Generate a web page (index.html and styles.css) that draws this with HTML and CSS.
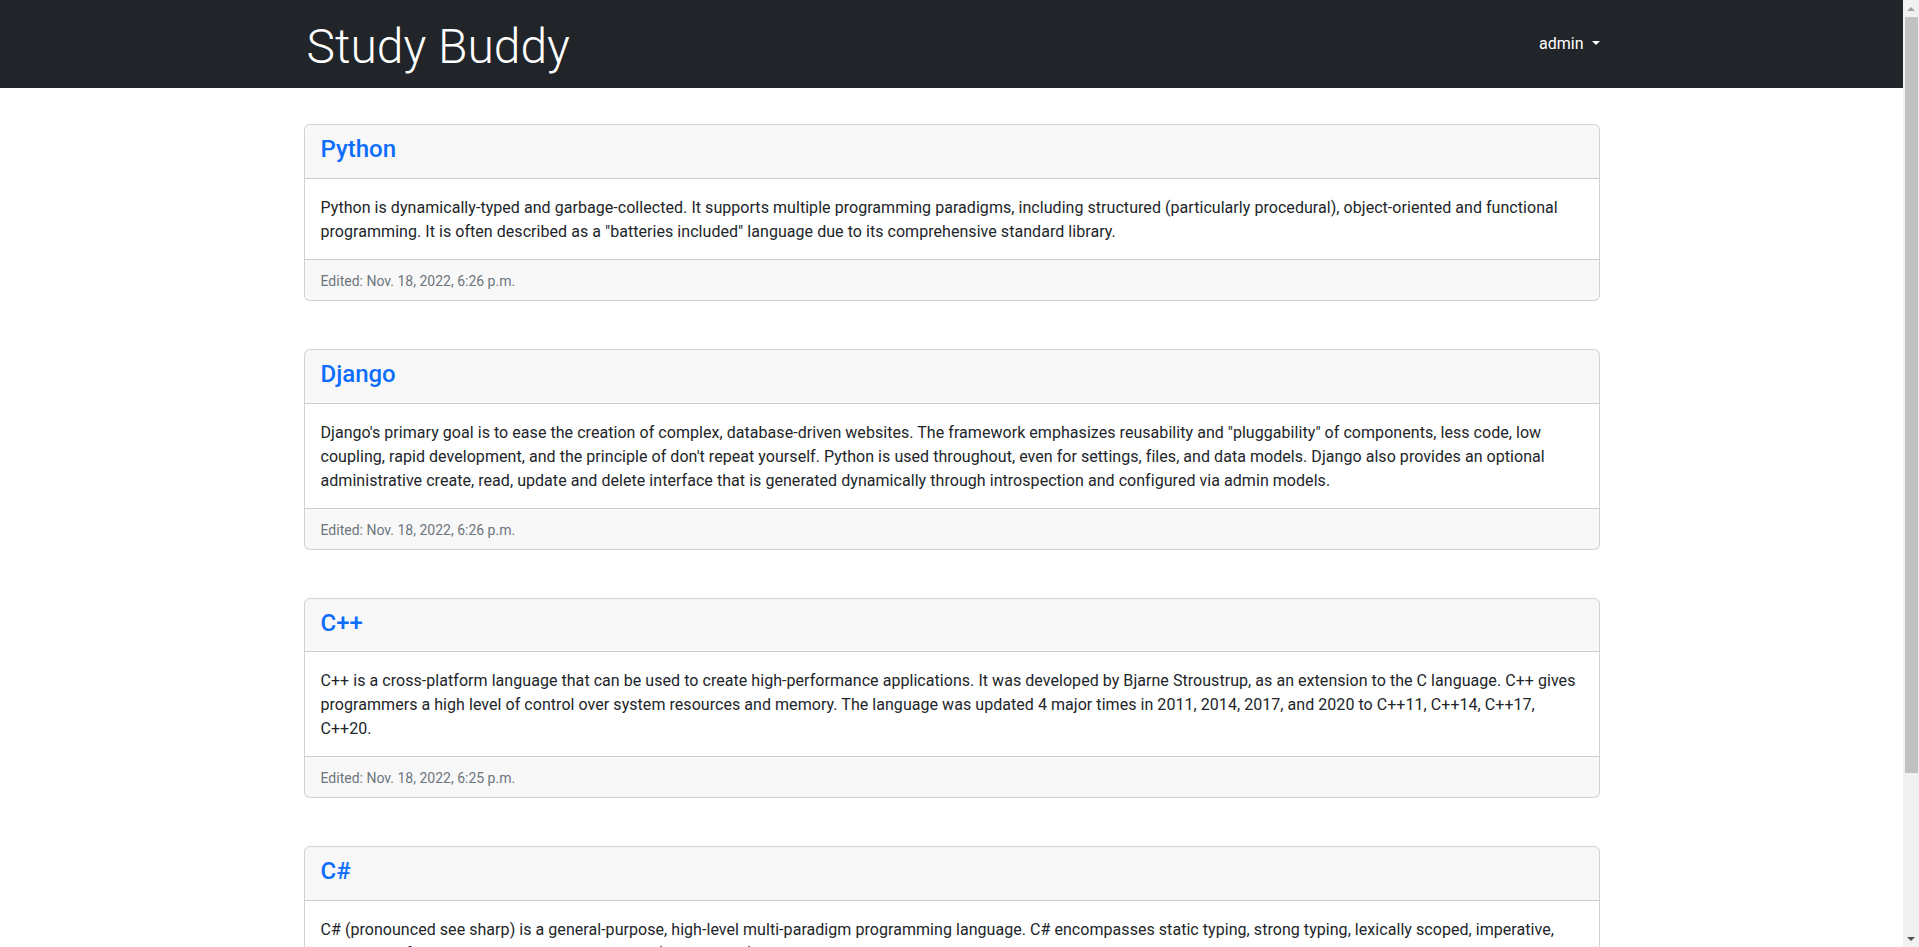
FILE: index.html
```html
<!DOCTYPE html>
<html lang="en">
<head>
<meta charset="utf-8">
<title>Study Buddy</title>
<link rel="stylesheet" href="styles.css">
</head>
<body>
<nav class="navbar">
  <div class="container nav-inner">
    <a class="brand" href="#">Study Buddy</a>
    <a class="nav-link dropdown-toggle" href="#">admin</a>
  </div>
</nav>

<main class="container content">
  <div class="card">
    <div class="card-header"><h4 class="card-title"><a href="#">Python</a></h4></div>
    <div class="card-body"><p class="card-text">Python is dynamically-typed and garbage-collected. It supports multiple programming paradigms, including structured (particularly procedural), object-oriented and functional programming. It is often described as a "batteries included" language due to its comprehensive standard library.</p></div>
    <div class="card-footer"><small class="muted">Edited: Nov. 18, 2022, 6:26 p.m.</small></div>
  </div>

  <div class="card">
    <div class="card-header"><h4 class="card-title"><a href="#">Django</a></h4></div>
    <div class="card-body"><p class="card-text">Django's primary goal is to ease the creation of complex, database-driven websites. The framework emphasizes reusability and "pluggability" of components, less code, low coupling, rapid development, and the principle of don't repeat yourself. Python is used throughout, even for settings, files, and data models. Django also provides an optional administrative create, read, update and delete interface that is generated dynamically through introspection and configured via admin models.</p></div>
    <div class="card-footer"><small class="muted">Edited: Nov. 18, 2022, 6:26 p.m.</small></div>
  </div>

  <div class="card">
    <div class="card-header"><h4 class="card-title"><a href="#">C++</a></h4></div>
    <div class="card-body"><p class="card-text">C++ is a cross-platform language that can be used to create high-performance applications. It was developed by Bjarne Stroustrup, as an extension to the C language. C++ gives programmers a high level of control over system resources and memory. The language was updated 4 major times in 2011, 2014, 2017, and 2020 to C++11, C++14, C++17, C++20.</p></div>
    <div class="card-footer"><small class="muted">Edited: Nov. 18, 2022, 6:25 p.m.</small></div>
  </div>

  <div class="card">
    <div class="card-header"><h4 class="card-title"><a href="#">C#</a></h4></div>
    <div class="card-body"><p class="card-text">C# (pronounced see sharp) is a general-purpose, high-level multi-paradigm programming language. C# encompasses static typing, strong typing, lexically scoped, imperative, declarative, functional, generic, object-oriented (class-based), and component-oriented programming disciplines.</p></div>
    <div class="card-footer"><small class="muted">Edited: Nov. 18, 2022, 6:25 p.m.</small></div>
  </div>
</main>

<div class="scrollbar" aria-hidden="true">
  <div class="sb-btn sb-up"></div>
  <div class="sb-thumb"></div>
  <div class="sb-space"></div>
  <div class="sb-btn sb-down"></div>
</div>
</body>
</html>
```
FILE: styles.css
```css
* { box-sizing: border-box; }

body {
  margin: 0 16px 0 0;
  font-family: Roboto, "Liberation Sans", Arial, sans-serif;
  font-size: 16px;
  line-height: 1.5;
  color: #212529;
  background: #fff;
}

a { color: #0d6efd; text-decoration: none; }

.container {
  width: 100%;
  max-width: 1320px;
  margin: 0 auto;
  padding: 0 12px;
}

/* Navbar */
.navbar {
  background: #212529;
  padding: 8px 0;
}

.nav-inner {
  display: flex;
  justify-content: space-between;
  align-items: center;
}

.brand {
  color: #fff;
  font-size: 48px;
  font-weight: 300;
  line-height: 66px;
  padding: 6px 0 0 3px;
  white-space: nowrap;
}

.nav-link {
  color: #fff;
  font-size: 16px;
  line-height: 24px;
  white-space: nowrap;
}

.dropdown-toggle::after {
  content: "";
  display: inline-block;
  margin-left: 8px;
  vertical-align: 0.255em;
  border-top: 0.3em solid;
  border-right: 0.3em solid transparent;
  border-left: 0.3em solid transparent;
  border-bottom: 0;
}

/* Content */
.content {
  padding-top: 36px;
  padding-bottom: 26px;
}

.card {
  display: flex;
  flex-direction: column;
  background: #fff;
  border: 1px solid rgba(0, 0, 0, 0.175);
  border-radius: 6px;
  margin-bottom: 48px;
}

.card-header {
  padding: 10px 16px 8px;
  background: rgba(33, 37, 41, 0.03);
  border-bottom: 1px solid rgba(0, 0, 0, 0.175);
  border-radius: 5px 5px 0 0;
}

.card-title {
  margin: 0 0 6px;
  font-size: 24px;
  font-weight: 500;
  line-height: 1.2;
}

.card-body {
  padding: 17px 16px 15px;
}

.card-text {
  margin: 0;
  letter-spacing: 0.05px;
}

.card-footer {
  padding: 9px 16px 7px;
  background: rgba(33, 37, 41, 0.03);
  border-top: 1px solid rgba(0, 0, 0, 0.175);
  border-radius: 0 0 5px 5px;
}

.muted {
  color: #6c757d;
  font-size: 14px;
}

/* Window scrollbar (browser chrome in the reference) */
.scrollbar {
  position: fixed;
  top: 0;
  right: 0;
  width: 16px;
  height: 100vh;
  background: #f1f1f1;
  display: flex;
  flex-direction: column;
}

.sb-btn {
  height: 17px;
  flex: none;
  display: flex;
  align-items: center;
  justify-content: center;
}

.sb-up::before,
.sb-down::before {
  content: "";
  display: block;
  border-left: 4px solid transparent;
  border-right: 4px solid transparent;
}

.sb-up::before { border-bottom: 4px solid #a3a3a3; }
.sb-down::before { border-top: 4px solid #505050; }

.sb-thumb {
  flex: none;
  height: 756px;
  margin: 0 1px 0 2px;
  background: #c1c1c1;
}

.sb-space { flex: 1; }
```
